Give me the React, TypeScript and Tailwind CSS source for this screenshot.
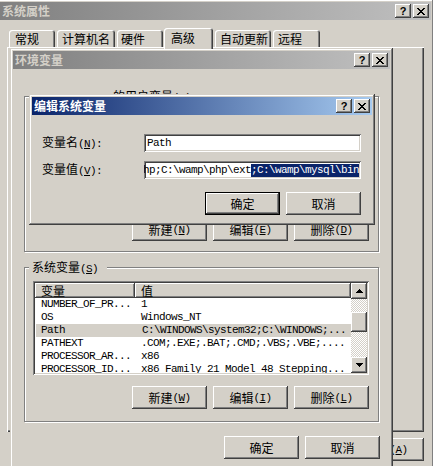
import React from 'react';

const FACE = 'bg-[#d4d0c8]';
const RAISED = 'shadow-[inset_-1px_-1px_0_#404040,inset_1px_1px_0_#ffffff,inset_-2px_-2px_0_#808080]';
const FRAME = 'shadow-[inset_-1px_-1px_0_#404040,inset_1px_1px_0_#d4d0c8,inset_-2px_-2px_0_#808080,inset_2px_2px_0_#ffffff]';
const SUNKEN = 'shadow-[inset_1px_1px_0_#808080,inset_-1px_-1px_0_#ffffff,inset_2px_2px_0_#404040,inset_-2px_-2px_0_#d4d0c8]';
const DEFAULT_BTN = 'shadow-[inset_0_0_0_1px_#000000,inset_-2px_-2px_0_#404040,inset_2px_2px_0_#ffffff,inset_-3px_-3px_0_#808080]';
const ETCHED = 'border border-[#808080] shadow-[1px_1px_0_#ffffff,inset_1px_1px_0_#ffffff]';
const MONO = "font-['Liberation_Mono',monospace] text-[11px] tracking-[-0.6px]";

const ROWS = [
    { name: 'NUMBER_OF_PR...', value: '1' },
    { name: 'OS', value: 'Windows_NT' },
    { name: 'Path', value: 'C:\\WINDOWS\\system32;C:\\WINDOWS;...', selected: true },
    { name: 'PATHEXT', value: '.COM;.EXE;.BAT;.CMD;.VBS;.VBE;....' },
    { name: 'PROCESSOR_AR...', value: 'x86' },
    { name: 'PROCESSOR_ID...', value: 'x86 Family 21 Model 48 Stepping...' },
];

const TABS = [
    { label: '常规', w: 'w-[46px] ml-[9px] pl-[6px]' },
    { label: '计算机名', w: 'w-[58px] ml-[2px] pl-[5px]' },
    { label: '硬件', w: 'w-[46px] ml-[2px] pl-[4px]' },
    { label: '高级', w: 'w-[49px] ml-[1px] pl-[7px]', selected: true },
    { label: '自动更新', w: 'w-[56px] ml-[2px] pl-[5px]' },
    { label: '远程', w: 'w-[47px] ml-[2px] pl-[5px]' },
];

// zh text followed by "(X)" with the access key underlined
function Mn({ zh, k, tail = '' }: { zh: string; k: string; tail?: string }) {
    return (
        <>
            {zh}
            <span className={MONO}>
                (<u>{k}</u>){tail}
            </span>
        </>
    );
}

function CloseGlyph() {
    return (
        <svg width="8" height="7" viewBox="0 0 8 7" shapeRendering="crispEdges">
            <path d="M0 0h2v1H0zM6 0h2v1H6zM1 1h2v1H1zM5 1h2v1H5zM2 2h4v1H2zM3 3h2v1H3zM2 4h4v1H2zM1 5h2v1H1zM5 5h2v1H5zM0 6h2v1H0zM6 6h2v1H6z" fill="#000" />
        </svg>
    );
}

function TitleBtn({ children, className = '' }: { children: React.ReactNode; className?: string }) {
    return (
        <div className={`flex h-[14px] w-[16px] items-center justify-center ${FACE} ${RAISED} ${className}`}>
            {children}
        </div>
    );
}

function TitleBar({ title, active = false }: { title: string; active?: boolean }) {
    const bg = active
        ? 'bg-[linear-gradient(to_right,#0a246a,#a6caf0)] text-white'
        : 'bg-[linear-gradient(to_right,#808080,#c0c0c0)] text-[#d4d0c8]';
    return (
        <div className={`flex h-[18px] items-center pl-[2px] pr-[2px] ${bg}`}>
            <span className="flex-1 text-[12px] font-bold leading-[12px]">{title}</span>
            <TitleBtn>
                <span className="font-['Liberation_Sans',sans-serif] text-[11px] font-bold leading-none text-black">?</span>
            </TitleBtn>
            <TitleBtn className="ml-[2px]">
                <CloseGlyph />
            </TitleBtn>
        </div>
    );
}

function Btn({ children, def = false, className = '' }: { children: React.ReactNode; def?: boolean; className?: string }) {
    return (
        <div className={`flex h-[23px] w-[75px] items-center justify-center text-[12px] leading-[12px] text-black ${FACE} ${def ? DEFAULT_BTN : RAISED} ${className}`}>
            {children}
        </div>
    );
}

function ListView() {
    return (
        <div className={`ml-[8px] mt-[13px] flex h-[94px] w-[336px] bg-white p-[2px] ${SUNKEN}`}>
            <div className="flex-1 overflow-hidden">
                <div className="flex h-[15px] text-[12px] leading-[12px] text-black">
                    <div className={`flex w-[100px] items-center pl-[6px] ${FACE} ${RAISED}`}>变量</div>
                    <div className={`flex flex-1 items-center pl-[6px] ${FACE} ${RAISED}`}>值</div>
                </div>
                {ROWS.map((r) => (
                    <div key={r.name} className={`flex h-[13px] items-center whitespace-nowrap text-black ${MONO} ${r.selected ? 'ml-[1px] bg-[#d4d0c8]' : ''}`}>
                        <span className={`w-[100px] ${r.selected ? 'pl-[5px]' : 'pl-[6px]'}`}>{r.name}</span>
                        <span className="pl-[6px]">{r.value}</span>
                    </div>
                ))}
            </div>
            <div className="flex w-[16px] flex-col">
                <div className={`flex h-[16px] items-center justify-center ${FACE} ${RAISED}`}>
                    <svg width="7" height="4" viewBox="0 0 7 4" shapeRendering="crispEdges"><path d="M3 0h1v1h1v1h1v1h1v1H0V3h1V2h1V1h1z" fill="#000" /></svg>
                </div>
                <div className="h-[13px] bg-[repeating-conic-gradient(#ffffff_0_25%,#d4d0c8_0_50%)] bg-[length:2px_2px]" />
                <div className={`h-[20px] ${FACE} ${RAISED}`} />
                <div className="flex-1 bg-[repeating-conic-gradient(#ffffff_0_25%,#d4d0c8_0_50%)] bg-[length:2px_2px]" />
                <div className={`flex h-[16px] items-center justify-center ${FACE} ${RAISED}`}>
                    <svg width="7" height="4" viewBox="0 0 7 4" shapeRendering="crispEdges"><path d="M0 0h7v1H6v1H5v1H4v1H3V3H2V2H1V1H0z" fill="#000" /></svg>
                </div>
            </div>
        </div>
    );
}

export default function App() {
    return (
        <div className={`relative h-[466px] w-[433px] overflow-hidden ${FACE} font-['Noto_Sans_CJK_SC',sans-serif] text-[12px]`}>
            {/* 系统属性 */}
            <div className={`absolute left-[-3px] top-[-1px] h-[480px] w-[437px] p-[3px] ${FACE} ${FRAME}`}>
                <TitleBar title="系统属性" />
                <div className="mt-[10px] flex h-[17px] items-end">
                    {TABS.map((t) => (
                        <div
                            key={t.label}
                            className={`relative flex items-center rounded-t-[3px] text-[12px] leading-[12px] text-black ${FACE} ${t.w} shadow-[inset_1px_1px_0_#ffffff,inset_-1px_0_0_#404040,inset_-2px_0_0_#808080] ${t.selected ? 'z-10 mb-[-2px] h-[21px] pb-[2px]' : 'h-[17px]'}`}
                        >
                            {t.label}
                        </div>
                    ))}
                </div>
                <div className="ml-[7px] h-[385px] w-[417px] shadow-[inset_1px_1px_0_#ffffff,inset_-1px_-1px_0_#404040,inset_-2px_-2px_0_#808080]" />
                <div className="mr-[7px] mt-[6px] flex justify-end gap-[6px]">
                    <Btn>确定</Btn>
                    <Btn>取消</Btn>
                    <Btn><Mn zh="应用" k="A" /></Btn>
                </div>
            </div>

            {/* 环境变量 */}
            <div className={`absolute left-[10px] top-[48px] h-[430px] w-[383px] p-[3px] ${FACE} ${FRAME}`}>
                <TitleBar title="环境变量" />
                <div className={`relative ml-[11px] mt-[27px] flex h-[156px] w-[355px] flex-col items-end justify-end pb-[10px] pr-[9px] ${ETCHED}`}>
                    <div className={`absolute left-[4px] top-[-7px] pl-[84px] pr-[6px] leading-[12px] text-black ${FACE}`}>
                        的用户变量<span className={MONO}>(<u>U</u>)</span>
                    </div>
                    <div className="flex gap-[6px]">
                        <Btn><Mn zh="新建" k="N" /></Btn>
                        <Btn><Mn zh="编辑" k="E" /></Btn>
                        <Btn><Mn zh="删除" k="D" /></Btn>
                    </div>
                </div>
                <div className={`relative ml-[11px] mt-[15px] flex h-[155px] w-[355px] flex-col ${ETCHED}`}>
                    <div className={`absolute left-[4px] top-[-7px] pl-[3px] pr-[9px] leading-[12px] text-black ${FACE}`}>
                        <Mn zh="系统变量" k="S" />
                    </div>
                    <ListView />
                    <div className="mr-[9px] mt-[11px] flex justify-end gap-[6px]">
                        <Btn><Mn zh="新建" k="W" /></Btn>
                        <Btn><Mn zh="编辑" k="I" /></Btn>
                        <Btn><Mn zh="删除" k="L" /></Btn>
                    </div>
                </div>
                <div className="mr-[10px] mt-[14px] flex justify-end gap-[6px]">
                    <Btn>确定</Btn>
                    <Btn>取消</Btn>
                </div>
            </div>

            {/* 编辑系统变量 */}
            <div className={`absolute left-[29px] top-[94px] h-[131px] w-[346px] p-[3px] ${FACE} ${FRAME}`}>
                <TitleBar title="编辑系统变量" active />
                <div className="mt-[19px] flex h-[18px] items-center pl-[10px]">
                    <span className="w-[102px] leading-[12px] text-black"><Mn zh="变量名" k="N" tail=":" /></span>
                    <div className={`flex h-[18px] w-[217px] items-center bg-white pl-[3px] text-black ${MONO} ${SUNKEN}`}>Path</div>
                </div>
                <div className="mt-[9px] flex h-[18px] items-center pl-[10px]">
                    <span className="w-[102px] leading-[12px] text-black"><Mn zh="变量值" k="V" tail=":" /></span>
                    <div className={`flex h-[18px] w-[217px] items-center justify-end overflow-hidden whitespace-nowrap bg-white px-[2px] text-black ${MONO} ${SUNKEN}`}>
                        <span className="shrink-0">%SystemRoot%\system32;C:\wamp\php;C:\wamp\php\ext</span>
                        <span className="shrink-0 bg-[#0a246a] leading-[13px] text-white">;C:\wamp\mysql\bin</span>
                    </div>
                </div>
                <div className="mr-[11px] mt-[13px] flex justify-end gap-[6px]">
                    <Btn def className="h-[22px]">确定</Btn>
                    <Btn className="h-[22px]">取消</Btn>
                </div>
            </div>
        </div>
    );
}
